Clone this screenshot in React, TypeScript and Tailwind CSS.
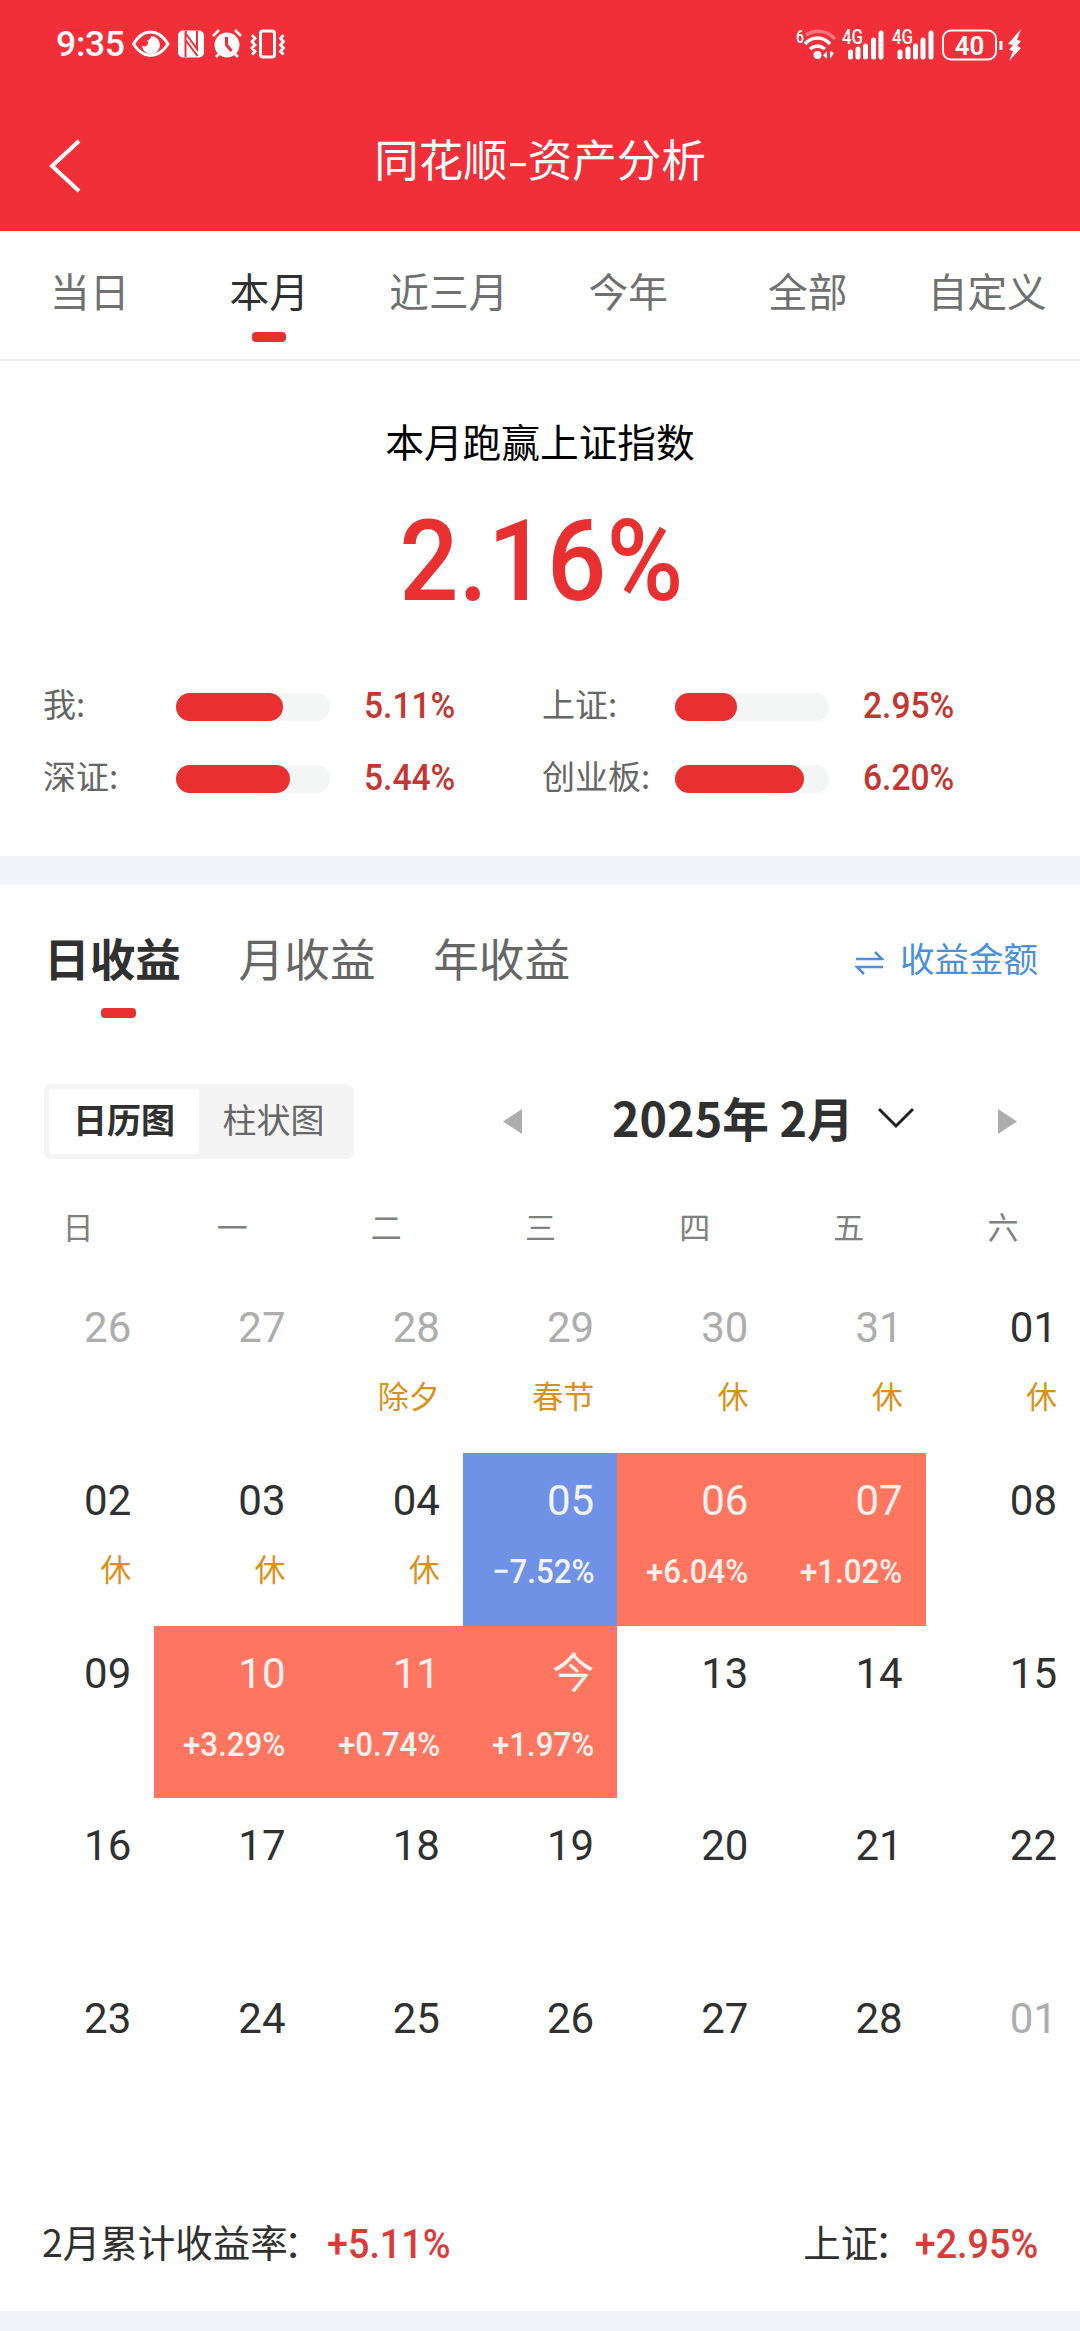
import type { ReactNode } from "react";

const ranges = ["当日", "本月", "近三月", "今年", "全部", "自定义"];

const benchmarks = [
    { label: "我:", value: "5.11%", bar: 107 },
    { label: "上证:", value: "2.95%", bar: 62 },
    { label: "深证:", value: "5.44%", bar: 114 },
    { label: "创业板:", value: "6.20%", bar: 129 },
];

const weekdays = ["日", "一", "二", "三", "四", "五", "六"];

type Day = { day: string; note?: string; rate?: string; muted?: boolean };

const days: Day[] = [
    { day: "26", muted: true },
    { day: "27", muted: true },
    { day: "28", muted: true, note: "除夕" },
    { day: "29", muted: true, note: "春节" },
    { day: "30", muted: true, note: "休" },
    { day: "31", muted: true, note: "休" },
    { day: "01", note: "休" },
    { day: "02", note: "休" },
    { day: "03", note: "休" },
    { day: "04", note: "休" },
    { day: "05", rate: "−7.52%" },
    { day: "06", rate: "+6.04%" },
    { day: "07", rate: "+1.02%" },
    { day: "08" },
    { day: "09" },
    { day: "10", rate: "+3.29%" },
    { day: "11", rate: "+0.74%" },
    { day: "今", rate: "+1.97%" },
    { day: "13" },
    { day: "14" },
    { day: "15" },
    { day: "16" },
    { day: "17" },
    { day: "18" },
    { day: "19" },
    { day: "20" },
    { day: "21" },
    { day: "22" },
    { day: "23" },
    { day: "24" },
    { day: "25" },
    { day: "26" },
    { day: "27" },
    { day: "28" },
    { day: "01", muted: true },
];

function StatusBar() {
    return (
        <div className="flex h-[90px] items-center justify-between pl-[56px] pr-[57px] text-white">
            <div className="flex items-center">
                <span className="w-[76px] font-['Roboto'] text-[35.500px] font-medium leading-none tracking-[-0.300px]">9:35</span>
                <svg className="mb-[3px]" width="154" height="32" viewBox="0 0 154 32" fill="none">
                    {/* eye */}
                    <path d="M1.500 16C7 7 13 4 18.500 4s12 3 17.500 12c-5.500 8.500-12 11.500-17.500 11.500S7 24.500 1.500 16Z" stroke="#fff" strokeWidth="3" />
                    <path d="M19 8a9 9 0 1 1-9 9.500c2 2 6 1 6-2.500 0-1.500-.5-2-1-2.500 2-.5 4-2 4-4.500Z" fill="#fff" />
                    {/* nfc */}
                    <rect x="46" y="2.500" width="26" height="27" rx="5" fill="#fff" />
                    <path d="M53.500 29V5c0-1 .5-1.500 1-2M53.500 12l12 16M65 3v18L54 6" stroke="#f12f38" strokeWidth="2" />
                    {/* alarm */}
                    <circle cx="95" cy="17" r="12.500" fill="#fff" />
                    <path d="M94.500 9v8l5 6" stroke="#f12f38" strokeWidth="3" />
                    <path d="m81 8 6-6M109 8l-6-6M84 29l4-4M106 29l-4-4" stroke="#fff" strokeWidth="2.500" />
                    {/* vibrate */}
                    <rect x="128.500" y="3" width="14" height="26" rx="2.500" stroke="#fff" strokeWidth="3" />
                    <path d="m120 7 3 3.500-3 3 3 3.500-3 3 3 3.500-3 3M151.500 7l-3 3.500 3 3-3 3.500 3 3-3 3.500 3 3" stroke="#fff" strokeWidth="2.800" />
                </svg>
            </div>
            <svg width="227" height="52" viewBox="0 -10 227 52" fill="none">
                <g fill="#fff" fontFamily="Roboto" fontWeight="500">
                    <text x="0" y="14" fontSize="18" textLength="8" lengthAdjust="spacingAndGlyphs">6</text>
                    <text x="46" y="15" fontSize="20" textLength="21" lengthAdjust="spacingAndGlyphs">4G</text>
                    <text x="96" y="15" fontSize="20" textLength="21" lengthAdjust="spacingAndGlyphs">4G</text>
                </g>
                <path d="M10 6c9-6 21-5 29 4" stroke="#fff" strokeOpacity=".35" strokeWidth="3.500" />
                <path d="M9 15c7-8 18-8 25 0M14 20c5-4 10-4 15 0" stroke="#fff" strokeWidth="3.500" />
                <circle cx="21.500" cy="26" r="4" fill="#fff" />
                <path d="M31 22v8l-4-3.500ZM34 22v8l4-6Z" fill="#fff" />
                <path d="M54.500 23v5M62 20v8M69.500 17v11M77.500 11v17M85 4v24" stroke="#fff" strokeWidth="5" strokeLinecap="round" />
                <path d="M104 23v5M112 20v8M119.500 17v11M127 11v17M135 4v24" stroke="#fff" strokeWidth="5" strokeLinecap="round" />
                <rect x="147" y="1.500" width="53" height="29" rx="8" stroke="#fff" strokeWidth="2" />
                <text x="173.500" y="25.500" fill="#fff" fontFamily="Roboto" fontWeight="600" fontSize="26" textAnchor="middle">40</text>
                <path d="M205 12v9" stroke="#fff" strokeWidth="3" />
                <path d="m225 0-13 15 5 1-4 5 4 1-4 10 12-13-4-2 4-5-4-1Z" fill="#fff" />
            </svg>
        </div>
    );
}

function Figure({ className, children }: { className: string; children: ReactNode }) {
    return <span className={`inline-block scale-x-[0.92] font-['Roboto'] font-medium leading-none ${className}`}>{children}</span>;
}

function DayCell({ day, note, rate, muted }: Day) {
    let tone = "text-[#303030]";
    if (rate) tone = rate.startsWith("+") ? "bg-[#ff7660] text-white/90" : "bg-[#6f92e6] text-white/90";
    if (muted) tone = "text-[#adadad]";

    return (
        <div className={`flex flex-col items-end pr-[23px] pt-[23px] ${tone}`}>
            <span className="h-[50px] font-['Roboto','Noto_Sans_CJK_SC',sans-serif] text-[42px] leading-[50px]">{day}</span>
            {note && <span className="mt-[20px] text-[31px] leading-[44px] text-[#d9911c]">{note}</span>}
            {rate && <Figure className="mt-[28px] origin-right text-[34px]">{rate}</Figure>}
        </div>
    );
}

export default function App() {
    return (
        <div className="h-[2331px] w-[1080px] overflow-hidden bg-white font-['Noto_Sans_CJK_SC',sans-serif] text-[#303030]">
            <header className="h-[231px] bg-[#f12f38]">
                <StatusBar />
                <div className="grid h-[141px] grid-cols-[1fr_auto_1fr] items-center px-[48px] text-white">
                    <svg className="mt-[10px]" width="34" height="56" viewBox="0 0 34 56" fill="none">
                        <path d="M31 3 4 28l27 25" stroke="#fff" strokeWidth="4" />
                    </svg>
                    <h1 className="mb-[6px] flex text-[44.500px] leading-[64px]">
                        同花顺
                        <span className="w-[20px] origin-center scale-x-[1.400] text-center">-</span>
                        资产分析
                    </h1>
                </div>
            </header>

            <nav className="flex h-[128px] w-[1077px] text-[39.700px]">
                {ranges.map((range) => (
                    <div
                        key={range}
                        className={`flex flex-1 flex-col items-center pt-[29px] leading-[60px] ${range === "本月" ? "text-[#303030]" : "text-[#707070]"}`}
                    >
                        {range}
                        {range === "本月" && <div className="mt-[12px] h-[10px] w-[34px] rounded-[4px] bg-[#e93030]" />}
                    </div>
                ))}
            </nav>

            <section className="h-[497px] border-t-2 border-[#f0f0f0]">
                <h2 className="pt-[49px] text-center text-[38.700px] leading-[60px] text-black">本月跑赢上证指数</h2>
                <div className="mt-[35px] pl-[2px] text-center">
                    <Figure className="text-[113.500px] text-[#e93030]">2.16%</Figure>
                </div>
                <div className="mt-[52px] grid grid-cols-[499px_1fr] pl-[43px]">
                    {benchmarks.map((item) => (
                        <div key={item.label} className="flex h-[72px] items-center">
                            <span className="mb-[6px] w-[133px] text-[33px] leading-none text-[#666]">{item.label}</span>
                            <div className="h-[28px] w-[154px] rounded-full bg-[#f4f6f6]">
                                <div className="h-full rounded-full bg-[#e93030]" style={{ width: item.bar }} />
                            </div>
                            <Figure className="ml-[34px] origin-left text-[36.500px] text-[#c4362f]">{item.value}</Figure>
                        </div>
                    ))}
                </div>
            </section>

            <div className="h-[29px] bg-[#f2f3f8]" />

            <section>
                <div className="flex h-[199px] items-start justify-between pl-[44px] pr-[42px] pt-[37px]">
                    <div className="flex gap-[57.500px] text-[45.700px] leading-[70px] text-[#666]">
                        <div className="flex flex-col items-center font-bold text-[#303030]">
                            日收益
                            <div className="ml-[12px] mt-[16px] h-[10px] w-[35px] rounded-[4px] bg-[#e93030]" />
                        </div>
                        <span>月收益</span>
                        <span>年收益</span>
                    </div>
                    <div className="flex h-[72px] items-center gap-[16px] text-[34.500px] text-[#4a90dc]">
                        <svg className="mt-[9px]" width="29" height="24" viewBox="0 0 29 24" fill="none" stroke="currentColor" strokeWidth="2.500">
                            <path d="M1 8h26l-7-7M28 16H2l7 7" />
                        </svg>
                        收益金额
                    </div>
                </div>

                <div className="flex h-[75px] items-center pl-[44px]">
                    <div className="flex h-[75px] w-[310px] rounded-[8px] bg-[#f4f4f4] p-[5px] text-[34px] leading-[59px]">
                        <div className="w-[150px] rounded-[4px] bg-white text-center font-bold">日历图</div>
                        <div className="w-[149px] text-center text-[#666]">柱状图</div>
                    </div>
                    <svg className="ml-[149px]" width="19" height="25" viewBox="0 0 19 25">
                        <path d="M19 0v25L0 12.500Z" fill="#adadad" />
                    </svg>
                    <div className="mb-[9px] ml-[90px] w-[240px] whitespace-nowrap text-[46.700px] font-bold leading-none">2025年 2月</div>
                    <svg className="mb-[7px] ml-[25px]" width="38" height="22" viewBox="0 0 38 22" fill="none">
                        <path d="m2 2 17 17L36 2" stroke="#222" strokeWidth="3" />
                    </svg>
                    <svg className="ml-[83px]" width="19" height="25" viewBox="0 0 19 25">
                        <path d="M0 0v25l19-12.500Z" fill="#adadad" />
                    </svg>
                </div>

                <div className="grid h-[121px] grid-cols-7 pl-[1px] pt-[44px] text-center text-[31px] leading-[46px] text-[#808080]">
                    {weekdays.map((w) => (
                        <span key={w}>{w}</span>
                    ))}
                </div>

                <div className="grid auto-rows-[172.800px] grid-cols-7">
                    {days.map((d, i) => (
                        <DayCell key={i} {...d} />
                    ))}
                </div>

                <div className="flex h-[167px] items-center justify-between px-[42px] pt-[34px] text-[37.500px]">
                    <div className="flex items-center">
                        <span className="mb-[6px]">
                            2月累计收益率<span className="-ml-[4px] mr-[6px]">：</span>
                        </span>
                        <Figure className="origin-left text-[41px] text-[#dc3a38]">+5.11%</Figure>
                    </div>
                    <div className="flex items-center">
                        <span className="mb-[6px]">
                            上证<span className="-ml-[4px] mr-[4px]">：</span>
                        </span>
                        <Figure className="-ml-[12px] origin-right text-[41px] text-[#dc3a38]">+2.95%</Figure>
                    </div>
                </div>
            </section>

            <div className="h-[20px] bg-[#f2f3f8]" />
        </div>
    );
}
